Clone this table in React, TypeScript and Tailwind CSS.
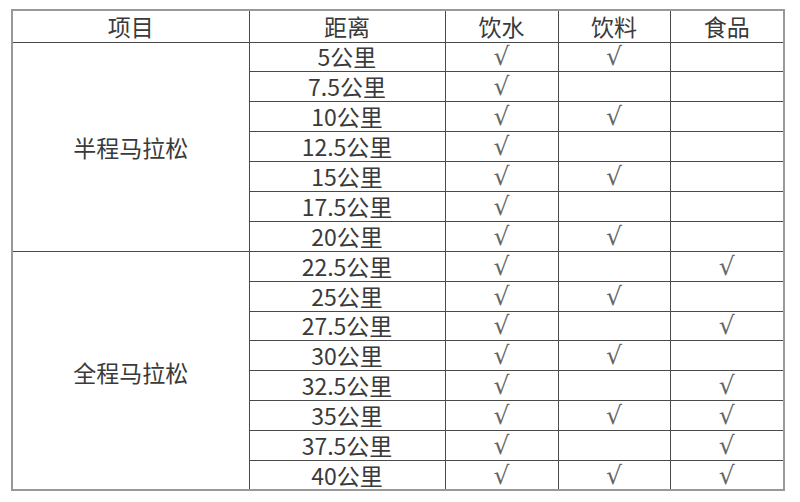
const ROWS: { d: string; w: boolean; b: boolean; f: boolean }[] = [
  { d: "5公里", w: true, b: true, f: false },
  { d: "7.5公里", w: true, b: false, f: false },
  { d: "10公里", w: true, b: true, f: false },
  { d: "12.5公里", w: true, b: false, f: false },
  { d: "15公里", w: true, b: true, f: false },
  { d: "17.5公里", w: true, b: false, f: false },
  { d: "20公里", w: true, b: true, f: false },
  { d: "22.5公里", w: true, b: false, f: true },
  { d: "25公里", w: true, b: true, f: false },
  { d: "27.5公里", w: true, b: false, f: true },
  { d: "30公里", w: true, b: true, f: false },
  { d: "32.5公里", w: true, b: false, f: true },
  { d: "35公里", w: true, b: true, f: true },
  { d: "37.5公里", w: true, b: false, f: true },
  { d: "40公里", w: true, b: true, f: true },
];

const cell = "border border-[#4a4a4a] p-0 text-center align-middle";

function Tick({ on }: { on: boolean }) {
  return (
    <td className={cell}>
      {on && <span className="font-['DejaVu_Serif',serif] text-[25px] font-light leading-none text-[#666]">√</span>}
    </td>
  );
}

export default function App() {
  return (
    <div className="h-[502px] w-[800px] bg-white pl-[11px] pt-[9px] font-['Noto_Sans_CJK_SC',sans-serif] text-[23px] text-[#3a3a3a]">
      <table className="w-[772px] table-fixed border-collapse border-2 border-[#999]">
        <colgroup>
          <col className="w-[237px]" />
          <col className="w-[196px]" />
          <col className="w-[113px]" />
          <col className="w-[112px]" />
          <col className="w-[114px]" />
        </colgroup>
        <thead>
          <tr className="h-[32px] leading-none">
            <th className={`${cell} font-normal`}>项目</th>
            <th className={`${cell} font-normal`}>距离</th>
            <th className={`${cell} font-normal`}>饮水</th>
            <th className={`${cell} font-normal`}>饮料</th>
            <th className={`${cell} font-normal`}>食品</th>
          </tr>
        </thead>
        <tbody>
          {ROWS.map((r, i) => (
            <tr key={r.d} className="h-[29.9px] leading-none">
              {i === 0 && (
                <td rowSpan={7} className={`${cell} pt-[1px]`}>
                  半程马拉松
                </td>
              )}
              {i === 7 && (
                <td rowSpan={8} className={`${cell} pt-[3px]`}>
                  全程马拉松
                </td>
              )}
              <td className={cell}>{r.d}</td>
              <Tick on={r.w} />
              <Tick on={r.b} />
              <Tick on={r.f} />
            </tr>
          ))}
        </tbody>
      </table>
    </div>
  );
}
